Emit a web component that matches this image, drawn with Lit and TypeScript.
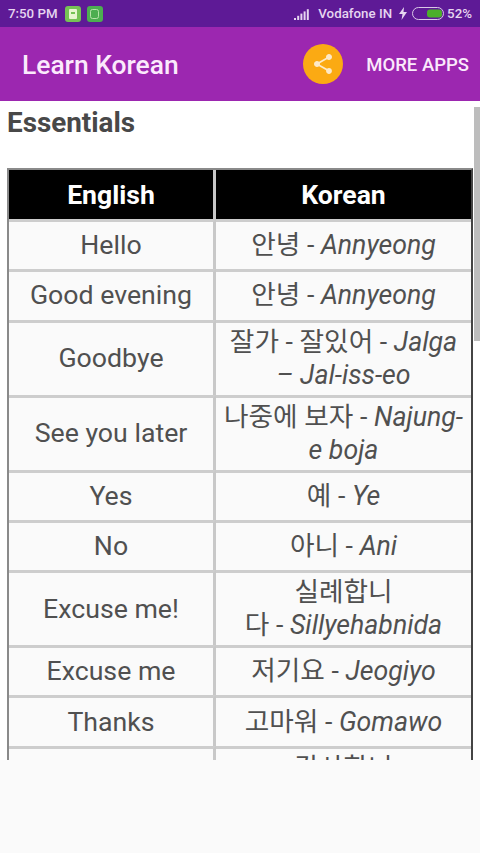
import { LitElement, html, css, svg } from "lit";
import { customElement } from "lit/decorators.js";

type Row = { en: string; ko: string; rom: string; tail?: string };

const ROWS: Row[] = [
  { en: "Hello", ko: "안녕 - ", rom: "Annyeong" },
  { en: "Good evening", ko: "안녕 - ", rom: "Annyeong" },
  { en: "Goodbye", ko: "잘가 - 잘있어 - ", rom: "Jalga – Jal-iss-eo" },
  { en: "See you later", ko: "나중에 보자 - ", rom: "Najung-e boja" },
  { en: "Yes", ko: "예 - ", rom: "Ye" },
  { en: "No", ko: "아니 - ", rom: "Ani" },
  { en: "Excuse me!", ko: "실례합니", tail: "다 - ", rom: "Sillyehabnida" },
  { en: "Excuse me", ko: "저기요 - ", rom: "Jeogiyo" },
  { en: "Thanks", ko: "고마워 - ", rom: "Gomawo" },
  { en: "Thank you", ko: "감사합니", tail: "다 - ", rom: "Gamsahabnida" },
];

@customElement("app-root")
export class AppRoot extends LitElement {
  static styles = css`
    :host { display: block; width: 480px; height: 853px; background: #fafafa; overflow: hidden;
      font-family: Roboto, "Noto Sans CJK KR", sans-serif; }
    .status { height: 27px; background: #5e1a96; color: #e6d5f0; display: flex; align-items: center;
      padding: 0 8px 0 8px; font-size: 13.3px; font-weight: 500; box-sizing: border-box; }
    .chip { width: 16px; height: 16px; border-radius: 3px; background: #76c255; margin-left: 7px;
      display: flex; align-items: center; justify-content: center; }
    .chip.b { background: #4cae50; margin-left: 6px; }
    .spacer { flex: 1; }
    .carrier { margin: 0 7px 0 8px; }
    .bolt { margin-right: 5px; display: block; }
    .batt { margin-right: 3px; display: block; }
    .bar { height: 74px; background: #9c27b0; display: flex; align-items: center; color: #fbeafc; box-sizing: border-box;
      padding: 0 11px 0 22px; }
    .title { font-size: 26.4px; font-weight: 500; flex: 1; margin-top: 2px; }
    .share { width: 40px; height: 40px; border-radius: 50%; background: #fbaa13; display: flex;
      align-items: center; justify-content: center; margin-right: 23px; }
    .more { font-size: 18.5px; font-weight: 500; margin-top: 2px; }
    .content { height: 659px; overflow: hidden; background: #fff; position: relative; padding: 5px 7px 0; box-sizing: border-box; }
    .thumb { position: absolute; right: 0; top: 6px; width: 6px; height: 234px; background: #bdbdbd; }
    h1 { margin: 0 0 28px; font-size: 27.8px; line-height: 34px; font-weight: 700; color: #484848; }
    table { border-collapse: separate; border-spacing: 0; width: 466px; table-layout: fixed; border: 2px solid #8a8a8a; border-right-color: #444; border-bottom: 0; }
    th { background: #000; color: #fff; font-size: 26.6px; font-weight: 700; height: 49px; padding: 0;
      border-right: 3px solid #c8c8c8; }
    td { background: #fafafa; color: #505050; font-size: 26.7px; line-height: 33px; text-align: center; padding: 3px 8px;
      height: 50.3px; box-sizing: border-box;
      border-right: 3px solid #c8c8c8; border-top: 3px solid #cdcdcd; }
    th:last-child, td:last-child { border-right: 0; }
    .c1 { width: 204px; }
    em { font-style: italic; }
    .nb { white-space: nowrap; }
  `;

  render() {
    return html`
      <div class="status">
        <span>7:50 PM</span>
        <span class="chip"><svg width="8" height="10" viewBox="0 0 8 10"><rect width="8" height="10" rx="1" fill="#e8f5d0"/><rect x="2" y="3" width="4" height="2" fill="#76c255"/></svg></span>
        <span class="chip b"><svg width="9" height="10" viewBox="0 0 9 10"><rect x=".5" y=".5" width="8" height="9" rx="2" fill="none" stroke="#b5e2a8"/></svg></span>
        <span class="spacer"></span>
        <svg width="16" height="12" viewBox="0 0 16 12" fill="#e6d5f0">
          ${[0, 1, 2, 3, 4].map((i) => svg`<rect x=${i * 3.2} y=${10 - i * 2.2} width="2" height=${2 + i * 2.2} />`)}
        </svg>
        <span class="carrier">Vodafone IN</span>
        <svg class="bolt" width="8" height="13" viewBox="0 0 8 13"><path d="M5 0 L0 7 H3.5 L2.5 13 L8 5 H4.5 Z" fill="#e6d5f0"/></svg>
        <svg class="batt" width="32" height="13" viewBox="0 0 32 13"><rect x=".5" y=".5" width="31" height="12" rx="6" fill="none" stroke="#d9c8e6"/><rect x="15" y="2.5" width="15" height="8" rx="3" fill="#4caf2a"/></svg>
        <span>52%</span>
      </div>
      <div class="bar">
        <span class="title">Learn Korean</span>
        <span class="share">
          <svg width="24" height="24" viewBox="0 0 24 24" fill="#fde9c8"><path d="M18 16.08c-.76 0-1.44.3-1.96.77L8.91 12.7c.05-.23.09-.46.09-.7s-.04-.47-.09-.7l7.05-4.11c.54.5 1.25.81 2.04.81 1.66 0 3-1.34 3-3s-1.34-3-3-3-3 1.34-3 3c0 .24.04.47.09.7L8.04 9.81C7.5 9.31 6.79 9 6 9c-1.66 0-3 1.34-3 3s1.34 3 3 3c.79 0 1.5-.31 2.04-.81l7.12 4.16c-.05.21-.08.43-.08.65 0 1.61 1.31 2.92 2.92 2.92 1.61 0 2.92-1.31 2.92-2.92s-1.31-2.92-2.92-2.92z"/></svg>
        </span>
        <span class="more">MORE APPS</span>
      </div>
      <div class="content">
        <div class="thumb"></div>
        <h1>Essentials</h1>
        <table>
          <thead><tr><th class="c1">English</th><th>Korean</th></tr></thead>
          <tbody>
            ${ROWS.map(
              (r) => html`<tr><td>${r.en}</td><td>${r.tail
                ? html`${r.ko}<wbr /><span class="nb">${r.tail}<em>${r.rom}</em></span>`
                : html`${r.ko}<em>${r.rom}</em>`}</td></tr>`,
            )}
          </tbody>
        </table>
      </div>
    `;
  }
}
